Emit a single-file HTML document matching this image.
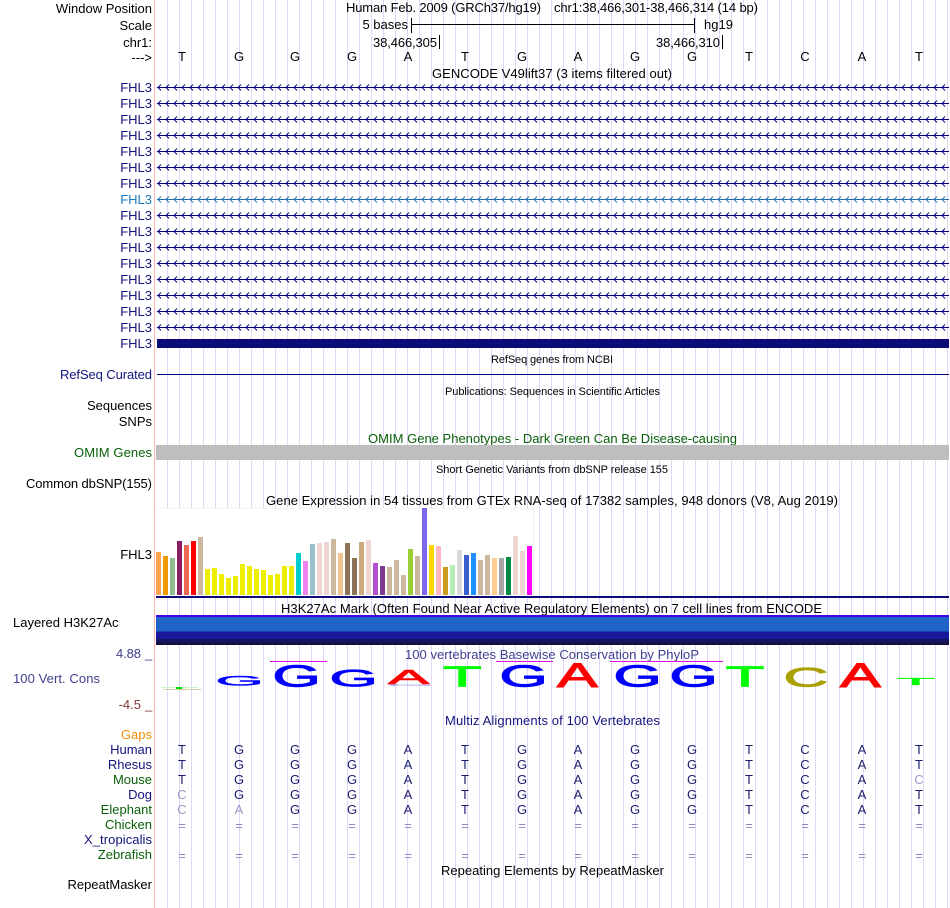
<!DOCTYPE html>
<html><head><meta charset="utf-8"><style>
html,body{margin:0;padding:0;background:#fff;width:950px;height:908px;overflow:hidden}
#grid{position:absolute;left:160px;top:0;width:790px;height:908px;background:linear-gradient(to right,#dcd8f6 1px,transparent 1px) 7px 0/12px 100% repeat-x}
svg{display:block;position:absolute;left:0;top:0}
text{font-family:"Liberation Sans",sans-serif;font-size:13px;fill:#000}
.r{text-anchor:end}.c{text-anchor:middle}
.s{font-size:11px}
.n{fill:#14147f}.g{fill:#0a5f0a}.p{fill:#404090}
.b text{fill:#1c1c70;text-anchor:middle}
.b .f{fill:#9a9ac8}
.e text{fill:#8a8ac8;text-anchor:middle}
.l text{font-size:100px;stroke-width:3}
</style></head><body>
<div id="grid"></div>
<svg width="950" height="908" viewBox="0 0 950 908" xmlns="http://www.w3.org/2000/svg" shape-rendering="crispEdges">
<defs>
<pattern id="ch" x="157" y="84" width="8" height="16" patternUnits="userSpaceOnUse"><rect y="3" width="8" height="1" fill="#000080"/><path d="M4 .5L1 3.5L4 6.5" fill="none" stroke="#000080" stroke-width=".9" shape-rendering="geometricPrecision"/></pattern>
<pattern id="ch2" x="157" y="196" width="8" height="16" patternUnits="userSpaceOnUse"><rect y="3" width="8" height="1" fill="#1a6cac"/><path d="M4 .5L1 3.5L4 6.5" fill="none" stroke="#1a6cac" stroke-width=".9" shape-rendering="geometricPrecision"/></pattern>
</defs>
<rect x="154" y="0" width="1" height="908" fill="#ffb4b4"/>

<text class="r" x="152" y="13">Window Position</text>
<text class="r" x="152" y="30">Scale</text>
<text class="r" x="152" y="47">chr1:</text>
<text class="r" x="152" y="62">---&gt;</text>
<text x="346" y="12" textLength="195">Human Feb. 2009 (GRCh37/hg19)</text>
<text x="554" y="12" textLength="204">chr1:38,466,301-38,466,314 (14 bp)</text>
<text class="r" x="408" y="29">5 bases</text>
<rect x="411" y="18" width="1" height="15"/><rect x="411" y="24" width="284" height="1"/><rect x="694" y="18" width="1" height="15"/>
<text x="704" y="29">hg19</text>
<text x="373" y="47" textLength="64">38,466,305</text><rect x="439" y="35" width="1" height="14"/>
<text x="656" y="47" textLength="64">38,466,310</text><rect x="722" y="35" width="1" height="14"/>
<g>
<text class="c" x="182" y="61">T</text><text class="c" x="239" y="61">G</text><text class="c" x="295" y="61">G</text><text class="c" x="352" y="61">G</text><text class="c" x="408" y="61">A</text><text class="c" x="465" y="61">T</text><text class="c" x="522" y="61">G</text><text class="c" x="578" y="61">A</text><text class="c" x="635" y="61">G</text><text class="c" x="692" y="61">G</text><text class="c" x="749" y="61">T</text><text class="c" x="805" y="61">C</text><text class="c" x="862" y="61">A</text><text class="c" x="919" y="61">T</text>
</g>
<text x="432" y="78" textLength="240">GENCODE V49lift37 (3 items filtered out)</text>

<text class="r n" x="152" y="92">FHL3</text><text class="r n" x="152" y="108">FHL3</text><text class="r n" x="152" y="124">FHL3</text><text class="r n" x="152" y="140">FHL3</text><text class="r n" x="152" y="156">FHL3</text><text class="r n" x="152" y="172">FHL3</text><text class="r n" x="152" y="188">FHL3</text>
<text class="r" x="152" y="204" style="fill:#1a7ac0">FHL3</text>
<text class="r n" x="152" y="220">FHL3</text><text class="r n" x="152" y="236">FHL3</text><text class="r n" x="152" y="252">FHL3</text><text class="r n" x="152" y="268">FHL3</text><text class="r n" x="152" y="284">FHL3</text><text class="r n" x="152" y="300">FHL3</text><text class="r n" x="152" y="316">FHL3</text><text class="r n" x="152" y="332">FHL3</text><text class="r n" x="152" y="348">FHL3</text>

<rect x="157" y="84" width="792" height="112" fill="url(#ch)"/>
<rect x="157" y="196" width="792" height="16" fill="url(#ch2)"/>
<rect x="157" y="212" width="792" height="127" fill="url(#ch)"/>
<rect x="157" y="339" width="792" height="9" fill="#0c0c78"/>
<rect x="157" y="374" width="792" height="1" fill="#000080"/>

<text class="s" x="491" y="363" textLength="122">RefSeq genes from NCBI</text>
<text class="n" x="60" y="379" textLength="92">RefSeq Curated</text>
<text class="s" x="445" y="395" textLength="215">Publications: Sequences in Scientific Articles</text>
<text class="r" x="152" y="410">Sequences</text>
<text class="r" x="152" y="426">SNPs</text>
<text class="g" x="368" y="443" textLength="369">OMIM Gene Phenotypes - Dark Green Can Be Disease-causing</text>
<text class="g" x="74" y="457" textLength="78">OMIM Genes</text>
<rect x="156" y="445" width="793" height="15" fill="#bebebe"/>
<text class="s" x="436" y="473" textLength="232">Short Genetic Variants from dbSNP release 155</text>
<text x="26" y="488" textLength="126">Common dbSNP(155)</text>
<text x="266" y="505" textLength="572">Gene Expression in 54 tissues from GTEx RNA-seq of 17382 samples, 948 donors (V8, Aug 2019)</text>
<text class="r" x="152" y="559">FHL3</text>

<rect x="156" y="508" width="377" height="88" fill="#fff"/>
<rect x="533" y="508" width="1" height="88" fill="#f0f0f4"/>
<rect x="156" y="508" width="377" height="1" fill="#f4f4f8"/>
<g>
<rect x="156" y="552" width="5" height="43" fill="#ffa54f"/>
<rect x="163" y="556" width="5" height="39" fill="#ee9a00"/>
<rect x="170" y="558" width="5" height="37" fill="#8fbc8f"/>
<rect x="177" y="541" width="5" height="54" fill="#8b1c62"/>
<rect x="184" y="545" width="5" height="50" fill="#ee6a50"/>
<rect x="191" y="541" width="5" height="54" fill="#ff0000"/>
<rect x="198" y="537" width="5" height="58" fill="#cdb79e"/>
<g fill="#eeee00">
<rect x="205" y="569" width="5" height="26"/>
<rect x="212" y="568" width="5" height="27"/>
<rect x="219" y="574" width="5" height="21"/>
<rect x="226" y="578" width="5" height="17"/>
<rect x="233" y="576" width="5" height="19"/>
<rect x="240" y="564" width="5" height="31"/>
<rect x="247" y="566" width="5" height="29"/>
<rect x="254" y="569" width="5" height="26"/>
<rect x="261" y="570" width="5" height="25"/>
<rect x="268" y="575" width="5" height="20"/>
<rect x="275" y="574" width="5" height="21"/>
<rect x="282" y="566" width="5" height="29"/>
<rect x="289" y="566" width="5" height="29"/>
</g>
<rect x="296" y="553" width="5" height="42" fill="#00cdcd"/>
<rect x="303" y="561" width="5" height="34" fill="#ee82ee"/>
<rect x="310" y="544" width="5" height="51" fill="#9ac0cd"/>
<rect x="317" y="543" width="5" height="52" fill="#eed5d2"/>
<rect x="324" y="542" width="5" height="53" fill="#eed5d2"/>
<rect x="331" y="539" width="5" height="56" fill="#cdb79e"/>
<rect x="338" y="553" width="5" height="42" fill="#eec591"/>
<rect x="345" y="543" width="5" height="52" fill="#8b7355"/>
<rect x="352" y="558" width="5" height="37" fill="#8b7355"/>
<rect x="359" y="542" width="5" height="53" fill="#cdaa7d"/>
<rect x="366" y="540" width="5" height="55" fill="#eed5d2"/>
<rect x="373" y="563" width="5" height="32" fill="#b452cd"/>
<rect x="380" y="566" width="5" height="29" fill="#7d3a8f"/>
<rect x="387" y="567" width="5" height="28" fill="#cdb79e"/>
<rect x="394" y="560" width="5" height="35" fill="#cdb79e"/>
<rect x="401" y="575" width="5" height="20" fill="#cdb79e"/>
<rect x="408" y="549" width="5" height="46" fill="#9acd32"/>
<rect x="415" y="556" width="5" height="39" fill="#cdb79e"/>
<rect x="422" y="508" width="5" height="87" fill="#7b68ee"/>
<rect x="429" y="545" width="5" height="50" fill="#ffd700"/>
<rect x="436" y="546" width="5" height="49" fill="#ffb6c1"/>
<rect x="443" y="567" width="5" height="28" fill="#cd9b1d"/>
<rect x="450" y="565" width="5" height="30" fill="#b4eeb4"/>
<rect x="457" y="550" width="5" height="45" fill="#d9d9d9"/>
<rect x="464" y="555" width="5" height="40" fill="#3a5fcd"/>
<rect x="471" y="553" width="5" height="42" fill="#1e90ff"/>
<rect x="478" y="560" width="5" height="35" fill="#cdb79e"/>
<rect x="485" y="555" width="5" height="40" fill="#cdb79e"/>
<rect x="492" y="558" width="5" height="37" fill="#ffcd8f"/>
<rect x="499" y="558" width="5" height="37" fill="#a6a6a6"/>
<rect x="506" y="557" width="5" height="38" fill="#008b45"/>
<rect x="513" y="536" width="5" height="59" fill="#eed5d2"/>
<rect x="520" y="551" width="5" height="44" fill="#eed5d2"/>
<rect x="527" y="546" width="5" height="49" fill="#ff00ff"/>
</g>
<rect x="156" y="596" width="793" height="2" fill="#0c0c78"/>

<text x="281" y="613" textLength="541">H3K27Ac Mark (Often Found Near Active Regulatory Elements) on 7 cell lines from ENCODE</text>
<text x="13" y="627">Layered H3K27Ac</text>
<rect x="156" y="615" width="793" height="2" fill="#4400e8"/>
<rect x="156" y="617" width="793" height="14" fill="#2064c8"/>
<rect x="156" y="631" width="793" height="1" fill="#1a40a8"/>
<rect x="156" y="632" width="793" height="7" fill="#18189c"/>
<rect x="156" y="639" width="793" height="4" fill="#14145c"/>
<rect x="156" y="643" width="793" height="2" fill="#180c38"/>

<text class="p" x="116" y="658" textLength="25">4.88</text><text class="p" x="145" y="658">_</text>
<text class="p" x="13" y="683" textLength="87">100 Vert. Cons</text>
<text class="r" x="141" y="709" style="fill:#803838">-4.5</text><text x="145" y="709" style="fill:#803838">_</text>
<text class="p" x="405" y="659" textLength="294">100 vertebrates Basewise Conservation by PhyloP</text>
<g fill="#e010e0">
<rect x="270" y="661" width="57" height="1"/><rect x="496" y="661" width="57" height="1"/><rect x="610" y="661" width="113" height="1"/>
</g>

<rect x="161" y="687" width="37" height="1" fill="#d0f4d0"/>
<rect x="163" y="689" width="38" height="1" fill="#d4d0a0"/>
<rect x="176" y="687" width="6" height="2" fill="#00e000"/>
<g class="l" shape-rendering="geometricPrecision">
<text style="fill:#0000ff;stroke:#0000ff" transform="translate(215.5,685.5) scale(.62,.14)">G</text>
<text style="fill:#0000ff;stroke:#0000ff" transform="translate(272.5,686.3) scale(.62,.31)">G</text>
<text style="fill:#0000ff;stroke:#0000ff" transform="translate(329.5,686.3) scale(.62,.24)">G</text>
<text style="fill:#a0a0f0;stroke:#a0a0f0" transform="translate(386,686) scale(.62,.03)">G</text>
<text style="fill:#ff0000;stroke:#ff0000" transform="translate(388,684) scale(.62,.2)">A</text>
<text style="fill:#00ff00;stroke:#00ff00" transform="translate(443,686.5) scale(.63,.29)">T</text>
<text style="fill:#0000ff;stroke:#0000ff" transform="translate(499.5,686.3) scale(.62,.31)">G</text>
<text style="fill:#ff0000;stroke:#ff0000" transform="translate(557,686.8) scale(.61,.345)">A</text>
<text style="fill:#0000ff;stroke:#0000ff" transform="translate(613.5,686.3) scale(.62,.31)">G</text>
<text style="fill:#0000ff;stroke:#0000ff" transform="translate(669.5,686.3) scale(.62,.31)">G</text>
<text style="fill:#00ff00;stroke:#00ff00" transform="translate(725.7,686.5) scale(.63,.29)">T</text>
<text style="fill:#aaa000;stroke:#aaa000" transform="translate(783.5,686.3) scale(.62,.27)">C</text>
<text style="fill:#ff0000;stroke:#ff0000" transform="translate(840,686.8) scale(.61,.345)">A</text>
<text style="fill:#00ff00;stroke:#00ff00" transform="translate(896.5,685) scale(.63,.1)">T</text>
</g>

<text class="n" x="445" y="725" textLength="215">Multiz Alignments of 100 Vertebrates</text>
<text class="r" x="152" y="739" style="fill:#f0920a">Gaps</text>
<text class="r n" x="152" y="754">Human</text>
<text class="r n" x="152" y="769">Rhesus</text>
<text class="r g" x="152" y="784">Mouse</text>
<text class="r n" x="152" y="799">Dog</text>
<text class="r g" x="152" y="814">Elephant</text>
<text class="r g" x="152" y="829">Chicken</text>
<text class="n" x="84" y="844" textLength="68">X_tropicalis</text>
<text class="r g" x="152" y="859">Zebrafish</text>

<g class="b">
<text x="182" y="754">T</text><text x="239" y="754">G</text><text x="295" y="754">G</text><text x="352" y="754">G</text><text x="408" y="754">A</text><text x="465" y="754">T</text><text x="522" y="754">G</text><text x="578" y="754">A</text><text x="635" y="754">G</text><text x="692" y="754">G</text><text x="749" y="754">T</text><text x="805" y="754">C</text><text x="862" y="754">A</text><text x="919" y="754">T</text>
<text x="182" y="769">T</text><text x="239" y="769">G</text><text x="295" y="769">G</text><text x="352" y="769">G</text><text x="408" y="769">A</text><text x="465" y="769">T</text><text x="522" y="769">G</text><text x="578" y="769">A</text><text x="635" y="769">G</text><text x="692" y="769">G</text><text x="749" y="769">T</text><text x="805" y="769">C</text><text x="862" y="769">A</text><text x="919" y="769">T</text>
<text x="182" y="784">T</text><text x="239" y="784">G</text><text x="295" y="784">G</text><text x="352" y="784">G</text><text x="408" y="784">A</text><text x="465" y="784">T</text><text x="522" y="784">G</text><text x="578" y="784">A</text><text x="635" y="784">G</text><text x="692" y="784">G</text><text x="749" y="784">T</text><text x="805" y="784">C</text><text x="862" y="784">A</text><text class="f" x="919" y="784">C</text>
<text class="f" x="182" y="799">C</text><text x="239" y="799">G</text><text x="295" y="799">G</text><text x="352" y="799">G</text><text x="408" y="799">A</text><text x="465" y="799">T</text><text x="522" y="799">G</text><text x="578" y="799">A</text><text x="635" y="799">G</text><text x="692" y="799">G</text><text x="749" y="799">T</text><text x="805" y="799">C</text><text x="862" y="799">A</text><text x="919" y="799">T</text>
<text class="f" x="182" y="814">C</text><text class="f" x="239" y="814">A</text><text x="295" y="814">G</text><text x="352" y="814">G</text><text x="408" y="814">A</text><text x="465" y="814">T</text><text x="522" y="814">G</text><text x="578" y="814">A</text><text x="635" y="814">G</text><text x="692" y="814">G</text><text x="749" y="814">T</text><text x="805" y="814">C</text><text x="862" y="814">A</text><text x="919" y="814">T</text>
</g>
<g class="e">
<text x="182" y="830">=</text><text x="239" y="830">=</text><text x="295" y="830">=</text><text x="352" y="830">=</text><text x="408" y="830">=</text><text x="465" y="830">=</text><text x="522" y="830">=</text><text x="578" y="830">=</text><text x="635" y="830">=</text><text x="692" y="830">=</text><text x="749" y="830">=</text><text x="805" y="830">=</text><text x="862" y="830">=</text><text x="919" y="830">=</text>
<text x="182" y="860">=</text><text x="239" y="860">=</text><text x="295" y="860">=</text><text x="352" y="860">=</text><text x="408" y="860">=</text><text x="465" y="860">=</text><text x="522" y="860">=</text><text x="578" y="860">=</text><text x="635" y="860">=</text><text x="692" y="860">=</text><text x="749" y="860">=</text><text x="805" y="860">=</text><text x="862" y="860">=</text><text x="919" y="860">=</text>
</g>
<text x="441" y="875" textLength="223">Repeating Elements by RepeatMasker</text>
<text class="r" x="152" y="889">RepeatMasker</text>
</svg>
</body></html>
